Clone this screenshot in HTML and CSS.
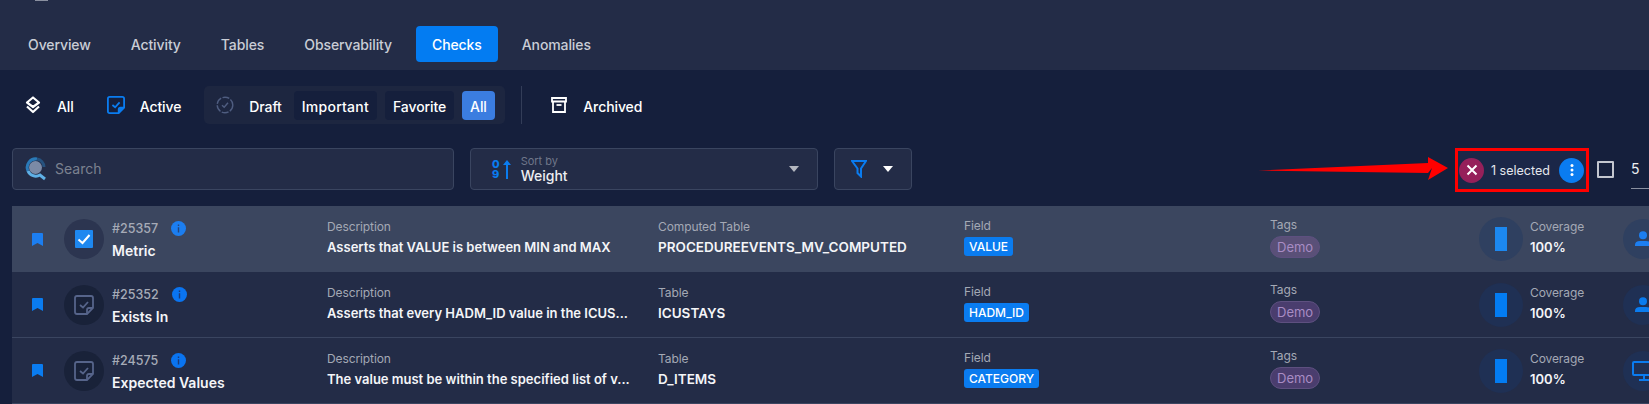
FILE: index.html
```html
<!DOCTYPE html>
<html>
<head>
    <title>Checks</title>
    <link rel="stylesheet" href="styles.css">
</head>
<body>
    <span class="logo-edge"></span>
    <header class="tabs">
        <span class="tab">Overview</span>
        <span class="tab">Activity</span>
        <span class="tab">Tables</span>
        <span class="tab">Observability</span>
        <span class="tab tab-active">Checks</span>
        <span class="tab">Anomalies</span>
    </header>

    <nav class="filters">
        <div class="status">
            <svg class="status-icon" viewBox="0 0 16 18" fill="none" stroke="#fff" stroke-width="2.200" stroke-linejoin="round"><path d="M8 1.500 14 6.500 8 11 2 6.500Z"/><path d="M2 10.500 8 16 14 10.500"/></svg>
            <span>All</span>
        </div>
        <div class="status status-active">
            <svg class="sheet-icon" viewBox="0 0 20 20" fill="none" stroke="#0a7cf0" stroke-width="2"><path d="M3 1H17Q19 1 19 3V13L13 19H3Q1 19 1 17V3Q1 1 3 1Z"/><path d="M13 19V15Q13 13 15 13H19" fill="#0a7cf0"/><path d="M6 10 9 12.500 14 7"/></svg>
            <span>Active</span>
        </div>
        <div class="subgroup">
            <div class="draft">
                <svg class="sheet-icon" viewBox="0 0 18 18" fill="none" stroke="#4f5d80" stroke-width="1.400"><circle cx="9" cy="9" r="7.800" stroke-dasharray="7 1.500"/><path d="M6 9.200 8.200 11.300 12 6.800"/></svg>
                <span>Draft</span>
            </div>
            <span class="pill pill-wide">Important</span>
            <span class="pill">Favorite</span>
            <span class="pill pill-on">All</span>
        </div>
        <div class="divider"></div>
        <div class="status">
            <svg class="status-icon" viewBox="0 0 16 17" fill="none" stroke="#fff" stroke-width="1.800"><path d="M1 1.500H15V5H1Z"/><path d="M2 5V15.500H14V5"/><path d="M5.500 8.500H10.500"/></svg>
            <span>Archived</span>
        </div>
    </nav>

    <section class="toolbar">
        <div class="box search-box">
            <svg class="search-icon" viewBox="0 0 22 24" fill="none"><circle cx="10.500" cy="10.500" r="6.500" fill="#7b8aa6"/><path d="M3 14A8.500 8.500 0 0 1 12 2" stroke="#2a7ab8" stroke-width="3"/><path d="M12 2A8.500 8.500 0 0 1 19 10" stroke="#26527f" stroke-width="3"/><path d="M3 14A8.500 8.500 0 0 0 15 18L20 22" stroke="#5fb0e6" stroke-width="3"/></svg>
            <span class="search-text">Search</span>
        </div>
        <div class="box sort-box">
            <div class="sort-digits"><span>0</span><span>9</span></div>
            <svg class="sort-arrow" viewBox="0 0 8 19" fill="#0a7cf0"><path d="M4 0 8 5H5V19H3V5H0Z"/></svg>
            <div class="sort-label">
                <small>Sort by</small>
                <span>Weight</span>
            </div>
            <i class="caret caret-grey"></i>
        </div>
        <div class="box filter-box">
            <svg class="funnel" viewBox="0 0 16 18" fill="none" stroke="#0a7cf0" stroke-width="2"><path d="M1 1H15L10 8.500V16.500L6.500 13V8.500Z"/></svg>
            <i class="caret"></i>
        </div>
        <div class="selected">
            <div class="selected-inner">
                <span class="round round-close">
                    <svg viewBox="0 0 12 12" width="12" height="12" stroke="#fff" stroke-width="2"><path d="M1.500 1.500 10.500 10.500M10.500 1.500 1.500 10.500"/></svg>
                </span>
                <span class="selected-text">1 selected</span>
                <span class="round round-menu">
                    <svg viewBox="0 0 4 14" width="4" height="14" fill="#fff"><circle cx="2" cy="2.500" r="1.500"/><circle cx="2" cy="7" r="1.500"/><circle cx="2" cy="11.500" r="1.500"/></svg>
                </span>
            </div>
        </div>
        <span class="checkbox"></span>
        <span class="per-page">5</span>
    </section>

    <svg class="arrow" viewBox="0 0 190 23" width="190" height="23" fill="#f00"><path d="M0 13.500 170 6V0L190 11 170 23 174 11 170 16Z"/></svg>

    <main class="rows">
        <article class="row row-selected">
            <svg class="bookmark" viewBox="0 0 11 13" fill="#1c7ef0"><path d="M0 1Q0 0 1 0H10Q11 0 11 1V13L5.500 10 0 13Z"/></svg>
            <span class="check-circle">
                <svg class="check-on" viewBox="0 0 18 18"><rect width="18" height="18" rx="1" fill="#1e88f0"/><path d="M3.500 9.500 7.500 13 14.500 5" fill="none" stroke="#fff" stroke-width="2"/></svg>
            </span>
            <div class="cell cell-id">
                <div class="check-id">#25357 <svg class="info" viewBox="0 0 15 15"><circle cx="7.500" cy="7.500" r="7.500" fill="#1c7ef0"/><path d="M6.800 3.500H8.200V5H6.800ZM6.800 6.300H8.200V11.500H6.800Z" fill="#26457a"/></svg></div>
                <div class="value">Metric</div>
            </div>
            <div class="cell">
                <div class="label">Description</div>
                <div class="value value-sm">Asserts that VALUE is between MIN and MAX</div>
            </div>
            <div class="cell">
                <div class="label">Computed Table</div>
                <div class="value value-table">PROCEDUREEVENTS_MV_COMPUTED</div>
            </div>
            <div class="cell cell-tag">
                <div class="label">Field</div>
                <span class="field-tag">VALUE</span>
            </div>
            <div class="cell cell-tag">
                <div class="label">Tags</div>
                <span class="tag">Demo</span>
            </div>
            <span class="cover-circle"><i></i></span>
            <div class="cell">
                <div class="label">Coverage</div>
                <div class="value value-sm">100%</div>
            </div>
            <span class="owner">
                <svg viewBox="0 0 16 16" width="16" height="16" fill="#1c7ef0"><circle cx="8" cy="4.200" r="4"/><path d="M0 15V14Q0 10 5 10H11Q16 10 16 14V15Z"/></svg>
            </span>
        </article>

        <article class="row">
            <svg class="bookmark" viewBox="0 0 11 13" fill="#0a7cf0"><path d="M0 1Q0 0 1 0H10Q11 0 11 1V13L5.500 10 0 13Z"/></svg>
            <span class="check-circle">
                <svg class="check-off" viewBox="0 0 20 20" fill="none" stroke="#56648a" stroke-width="1.800"><path d="M3 1H17Q19 1 19 3V13L13 19H3Q1 19 1 17V3Q1 1 3 1Z"/><path d="M13 19V15Q13 13 15 13H19"/><path d="M6 10 9 12.500 14 7"/></svg>
            </span>
            <div class="cell cell-id">
                <div class="check-id">#25352 <svg class="info" viewBox="0 0 15 15"><circle cx="7.500" cy="7.500" r="7.500" fill="#0a74f0"/><path d="M6.800 3.500H8.200V5H6.800ZM6.800 6.300H8.200V11.500H6.800Z" fill="#1b3a78"/></svg></div>
                <div class="value">Exists In</div>
            </div>
            <div class="cell">
                <div class="label">Description</div>
                <div class="value value-sm">Asserts that every HADM_ID value in the ICUS...</div>
            </div>
            <div class="cell">
                <div class="label">Table</div>
                <div class="value value-table">ICUSTAYS</div>
            </div>
            <div class="cell cell-tag">
                <div class="label">Field</div>
                <span class="field-tag">HADM_ID</span>
            </div>
            <div class="cell cell-tag">
                <div class="label">Tags</div>
                <span class="tag">Demo</span>
            </div>
            <span class="cover-circle"><i></i></span>
            <div class="cell">
                <div class="label">Coverage</div>
                <div class="value value-sm">100%</div>
            </div>
            <span class="owner">
                <svg viewBox="0 0 16 16" width="16" height="16" fill="#0a7cf0"><circle cx="8" cy="4.200" r="4"/><path d="M0 15V14Q0 10 5 10H11Q16 10 16 14V15Z"/></svg>
            </span>
        </article>

        <article class="row">
            <svg class="bookmark" viewBox="0 0 11 13" fill="#0a7cf0"><path d="M0 1Q0 0 1 0H10Q11 0 11 1V13L5.500 10 0 13Z"/></svg>
            <span class="check-circle">
                <svg class="check-off" viewBox="0 0 20 20" fill="none" stroke="#56648a" stroke-width="1.800"><path d="M3 1H17Q19 1 19 3V13L13 19H3Q1 19 1 17V3Q1 1 3 1Z"/><path d="M13 19V15Q13 13 15 13H19"/><path d="M6 10 9 12.500 14 7"/></svg>
            </span>
            <div class="cell cell-id">
                <div class="check-id">#24575 <svg class="info" viewBox="0 0 15 15"><circle cx="7.500" cy="7.500" r="7.500" fill="#0a74f0"/><path d="M6.800 3.500H8.200V5H6.800ZM6.800 6.300H8.200V11.500H6.800Z" fill="#1b3a78"/></svg></div>
                <div class="value">Expected Values</div>
            </div>
            <div class="cell">
                <div class="label">Description</div>
                <div class="value value-sm">The value must be within the specified list of v...</div>
            </div>
            <div class="cell">
                <div class="label">Table</div>
                <div class="value value-table">D_ITEMS</div>
            </div>
            <div class="cell cell-tag">
                <div class="label">Field</div>
                <span class="field-tag">CATEGORY</span>
            </div>
            <div class="cell cell-tag">
                <div class="label">Tags</div>
                <span class="tag">Demo</span>
            </div>
            <span class="cover-circle"><i></i></span>
            <div class="cell">
                <div class="label">Coverage</div>
                <div class="value value-sm">100%</div>
            </div>
            <span class="owner owner-screen">
                <svg viewBox="0 0 21 20" width="21" height="20" fill="none" stroke="#0a7cf0" stroke-width="2"><path d="M2 1H22V14H2Q1 14 1 13V2Q1 1 2 1Z"/><path d="M12 14V18M7 19H17"/></svg>
            </span>
        </article>
    </main>
</body>
</html>
```

FILE: styles.css
```css
html, body { margin: 0; height: 404px; overflow: hidden; }
body { position: relative; background: #151f3c; color: #fff; font-family: Inter, "Noto Sans", sans-serif; }
.logo-edge { position: absolute; left: 35px; top: 0; width: 13px; height: 1px; background: #8a90a0; }

/* tabs */
.tabs { height: 70px; box-sizing: border-box; padding: 26px 0 0 12px; display: flex; gap: 8px; align-items: flex-start; background: #232c47; }
.tab { height: 36px; line-height: 37px; padding: 0 16px; font-size: 14px; font-weight: 500; color: #c9cdd6; border-radius: 4px; letter-spacing: -0.1px; }
.tab-active { background: #037cf2; color: #fff; }

/* status filters */
.filters { display: flex; align-items: center; height: 38px; margin-top: 16px; padding-left: 25px; font-size: 14px; font-weight: 500; letter-spacing: -0.1px; }
.status { display: flex; align-items: center; gap: 16px; margin-right: 33px; }
.status span, .draft span { padding-top: 2px; }
.status-active { gap: 15px; margin-right: 23px; }
.status-icon { width: 16px; height: 18px; flex: none; }
.sheet-icon { width: 18px; height: 18px; flex: none; }
.subgroup { display: flex; align-items: center; flex: none; height: 38px; width: 301px; box-sizing: border-box; padding: 0 9px 0 12px; gap: 8px; background: #1d2640; border-radius: 5px; }
.draft { display: flex; align-items: center; gap: 15px; margin-right: 4px; }
.pill { height: 29px; line-height: 31px; padding: 0 8px; background: #151f3c; border-radius: 4px; }
.pill-wide { letter-spacing: 0.25px; }
.pill-on { background: #3b7de0; }
.divider { width: 1px; height: 38px; margin: 0 29px 0 16px; background: #333d58; }

/* toolbar */
.toolbar { display: flex; align-items: flex-start; height: 44px; margin-top: 24px; padding-left: 12px; }
.box { height: 42px; box-sizing: border-box; display: flex; align-items: center; background: #232c47; border: 1px solid #3a4560; border-radius: 4px; }
.search-box { width: 442px; padding-left: 12px; gap: 8px; }
.search-icon { width: 22px; height: 24px; }
.search-text { padding-bottom: 2px; font-size: 14px; color: #7c8290; }
.sort-box { width: 348px; margin-left: 16px; padding: 0 18px 0 21px; }
.sort-digits { display: flex; flex-direction: column; font-size: 11px; font-weight: 800; line-height: 10px; color: #0a7cf0; }
.sort-arrow { width: 8px; height: 19px; margin: 0 10px 0 3px; }
.sort-label { flex: 1; display: flex; flex-direction: column; font-size: 14px; font-weight: 500; color: #eceef2; line-height: 16px; }
.sort-label small { font-size: 11px; font-weight: 400; color: #70778a; line-height: 13px; }
.caret { width: 0; height: 0; border: 5px solid transparent; border-top: 6px solid #fff; border-bottom: 0; }
.caret-grey { border-top-color: #b4b7c0; }
.filter-box { width: 78px; margin-left: 16px; padding-left: 16px; gap: 16px; }
.funnel { width: 16px; height: 18px; }

/* selection */
.selected { width: 134px; height: 44px; box-sizing: border-box; margin-left: auto; border: 3px solid #f00; }
.selected-inner { display: flex; align-items: center; height: 100%; padding: 0 2px 0 1px; background: #1b2748; }
.round { width: 25px; height: 25px; border-radius: 50%; display: flex; align-items: center; justify-content: center; flex: none; }
.round-close { background: #96205a; }
.round-menu { background: #0a7cf0; }
.selected-text { flex: 1; padding-left: 7px; font-size: 12.500px; color: #e4e7ee; white-space: nowrap; }
.checkbox { width: 13px; height: 13px; margin: 13px 0 0 8px; border: 2px solid #c3c6cf; border-radius: 1px; }
.per-page { width: 18px; height: 29px; margin: 11px 0 0 17px; font-size: 14px; line-height: 19px; color: #eceef2; border-bottom: 1px solid #8a90a0; }

.arrow { position: absolute; left: 1258px; top: 157px; }

/* check rows */
.rows { margin: 14px 0 0 12px; }
.row { height: 66px; box-sizing: border-box; display: grid; grid-template-columns: 32px 48px 216px 331px 306px 306px 208px 52px 92px 40px; align-items: center; padding-left: 20px; background: #232c47; border-bottom: 1px solid #3a4560; white-space: nowrap; }
.row-selected { background: #3b465f; border-bottom: 0; }
.bookmark { width: 11px; height: 13px; }
.check-circle { width: 40px; height: 40px; border-radius: 50%; background: #192239; display: flex; align-items: center; justify-content: center; }
.row-selected .check-circle { background: #2c3550; }
.check-on { width: 18px; height: 18px; }
.check-off { width: 20px; height: 20px; }
.cell { display: flex; flex-direction: column; align-items: flex-start; gap: 5px; min-width: 0; margin: -2px 0 0 -1px; }
.cell-id { gap: 6px; margin: 2px 0 0; }
.cell-tag { margin-top: -3px; }
.check-id { display: flex; align-items: center; gap: 6px; font-size: 12.500px; font-weight: 500; color: #a6abb7; height: 15px; }
.info { width: 15px; height: 15px; margin-left: 7px; }
.label { font-size: 12px; color: #a4a9b5; line-height: 14px; letter-spacing: -0.1px; }
.value { font-size: 14px; font-weight: 600; line-height: 17px; color: #f4f5f8; }
.value-sm { font-size: 13px; }
.value-table { font-size: 13.500px; }
.field-tag { height: 19px; line-height: 19px; padding: 0 5px; font-size: 12px; font-weight: 500; color: #fff; background: #0a7cf0; border-radius: 3px; margin-top: -1px; }
.tag { height: 20px; line-height: 20px; padding: 0 6px; font-size: 13px; color: #a88cc4; background: #4a3d6e; border: 1px solid #5e5080; border-radius: 11px; margin-top: -1px; }
.row-selected .tag { background: #5a5078; }
.cover-circle { width: 44px; height: 44px; border-radius: 50%; background: #1f3054; display: flex; align-items: center; justify-content: center; }
.row-selected .cover-circle { background: #2f4060; }
.cover-circle i { width: 12px; height: 24px; background: #037cf2; }
.row-selected .cover-circle i { background: #1c88f0; }
.owner { width: 40px; height: 40px; border-radius: 50%; background: #1f3054; display: flex; align-items: center; padding-left: 12px; box-sizing: border-box; }
.owner-screen { padding-left: 9px; }
.row-selected .owner { background: #2f4060; }
```
